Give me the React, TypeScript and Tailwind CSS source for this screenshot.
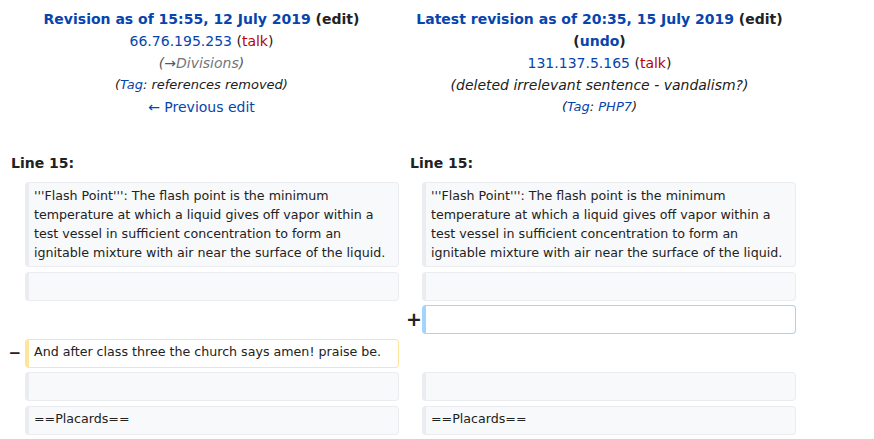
import React from 'react';

const link = 'text-[#0645ad]';
const ctxBox =
  'min-h-[29px] rounded-[4px] border border-l-4 border-[#eaecf0] bg-[#f8f9fa] px-[5px] pt-[2.5px] pb-[4.5px] whitespace-pre-wrap break-words';
const delBox =
  'min-h-[29px] rounded-[4px] border border-l-4 border-[#ffe49c] bg-white px-[5px] pt-[2.5px] pb-[4.5px] whitespace-pre-wrap break-words';
const addBox =
  'min-h-[29px] rounded-[4px] border border-l-4 border-[#a3d3ff] bg-white px-[5px] pt-[2.5px] pb-[4.5px] whitespace-pre-wrap break-words';

const flashPoint =
  "'''Flash Point''': The flash point is the minimum temperature at which a liquid gives off vapor within a test vessel in sufficient concentration to form an ignitable mixture with air near the surface of the liquid.";

const Marker: React.FC<{ sign: string; className?: string }> = ({ sign, className }) => (
  <div className={`flex items-center justify-end font-bold leading-none ${className ?? ''}`}>{sign}</div>
);

const App: React.FC = () => {
  return (
    <div className="min-h-[439px] w-[874px] bg-white pt-[8px] font-['DejaVu_Sans',sans-serif] text-[#202122]">
      {/* Revision headers */}
      <div className="grid grid-cols-[399px_397px] text-[14px] leading-[22px]">
        <div className="pl-[4px] text-center">
          <div className="font-bold">
            <span className={link}>Revision as of 15:55, 12 July 2019</span> (<span className="text-[#222]">edit</span>)
          </div>
          <div>
            <span className={link}>66.76.195.253</span> (<span className="text-[#ba0000]">talk</span>)
          </div>
          <div className="italic text-[#54595d]">
            (→<span className="text-[#72777d]">Divisions</span>)
          </div>
          <div className="italic text-[13px]">
            (<span className={link}>Tag</span>: references removed)
          </div>
          <div>
            <span className={link}>← Previous edit</span>
          </div>
        </div>
        <div className="pl-[4px] text-center">
          <div className="font-bold">
            <span className={link}>Latest revision as of 20:35, 15 July 2019</span> (<span className="text-[#222]">edit</span>)
          </div>
          <div className="font-bold">
            (<span className={link}>undo</span>)
          </div>
          <div>
            <span className={link}>131.137.5.165</span> (<span className="text-[#ba0000]">talk</span>)
          </div>
          <div className="italic">(deleted irrelevant sentence - vandalism?)</div>
          <div className="italic text-[13px]">
            (<span className={link}>Tag</span>: <span className={link}>PHP7</span>)
          </div>
        </div>
      </div>

      {/* Line numbers */}
      <div className="mt-[34px] grid grid-cols-[399px_397px] text-[14px] font-bold leading-[22px]">
        <div className="pl-[11px]">Line 15:</div>
        <div className="pl-[11px]">Line 15:</div>
      </div>

      {/* Diff rows */}
      <div className="mt-[8px] grid grid-cols-[25px_374px_23px_374px] gap-y-[4.5px] text-[12.65px] leading-[19px] text-[#222]">
        <div />
        <div className={ctxBox}>{flashPoint}</div>
        <div />
        <div className={ctxBox}>{flashPoint}</div>

        <div />
        <div className={ctxBox} />
        <div />
        <div className={ctxBox} />

        <div className="col-span-2" />
        <Marker sign="+" className="pr-[0px] text-[19px]" />
        <div className={addBox} />

        <Marker sign="−" className="pr-[4px] text-[15px]" />
        <div className={delBox}>And after class three the church says amen! praise be.</div>
        <div className="col-span-2" />

        <div />
        <div className={ctxBox} />
        <div />
        <div className={ctxBox} />

        <div />
        <div className={ctxBox}>==Placards==</div>
        <div />
        <div className={ctxBox}>==Placards==</div>
      </div>
    </div>
  );
};

export default App;
